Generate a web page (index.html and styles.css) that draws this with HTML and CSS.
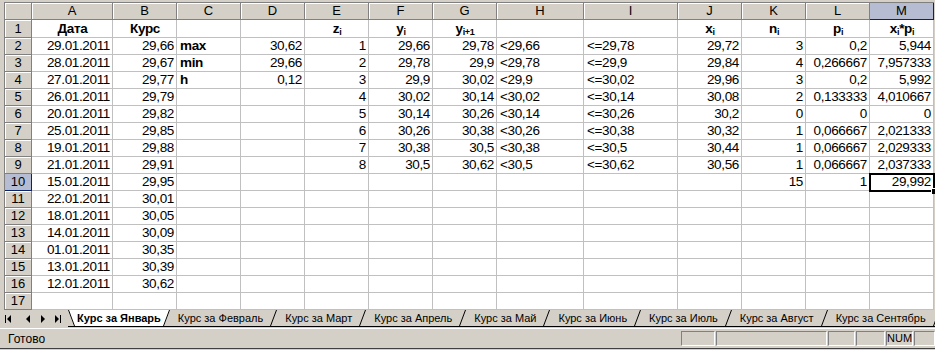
FILE: index.html
```html
<!DOCTYPE html>
<html>
	<head>
		<meta charset="utf-8">
		<title>Курс за Январь</title>
		<link rel="stylesheet" href="styles.css">
	</head>
	<body>
		<div class="sheet">
			<div class="hd"></div><div class="hd">A</div><div class="hd">B</div><div class="hd">C</div><div class="hd">D</div><div class="hd">E</div><div class="hd">F</div><div class="hd">G</div><div class="hd">H</div><div class="hd">I</div><div class="hd">J</div><div class="hd">K</div><div class="hd">L</div><div class="hd on">M</div>

			<div class="hd">1</div><div class="t">Дата</div><div class="t">Курс</div><div></div><div></div><div class="t">z<sub>i</sub></div><div class="t">y<sub>i</sub></div><div class="t">y<sub>i+1</sub></div><div></div><div></div><div class="t">x<sub>i</sub></div><div class="t">n<sub>i</sub></div><div class="t">p<sub>i</sub></div><div class="t">x<sub>i</sub>*p<sub>i</sub></div>

			<div class="hd">2</div><div class="n">29.01.2011</div><div class="n">29,66</div><div class="b">max</div><div class="n">30,62</div><div class="n">1</div><div class="n">29,66</div><div class="n">29,78</div><div>&lt;29,66</div><div>&lt;=29,78</div><div class="n">29,72</div><div class="n">3</div><div class="n">0,2</div><div class="n">5,944</div>
			<div class="hd">3</div><div class="n">28.01.2011</div><div class="n">29,67</div><div class="b">min</div><div class="n">29,66</div><div class="n">2</div><div class="n">29,78</div><div class="n">29,9</div><div>&lt;29,78</div><div>&lt;=29,9</div><div class="n">29,84</div><div class="n">4</div><div class="n">0,266667</div><div class="n">7,957333</div>
			<div class="hd">4</div><div class="n">27.01.2011</div><div class="n">29,77</div><div class="b">h</div><div class="n">0,12</div><div class="n">3</div><div class="n">29,9</div><div class="n">30,02</div><div>&lt;29,9</div><div>&lt;=30,02</div><div class="n">29,96</div><div class="n">3</div><div class="n">0,2</div><div class="n">5,992</div>
			<div class="hd">5</div><div class="n">26.01.2011</div><div class="n">29,79</div><div></div><div></div><div class="n">4</div><div class="n">30,02</div><div class="n">30,14</div><div>&lt;30,02</div><div>&lt;=30,14</div><div class="n">30,08</div><div class="n">2</div><div class="n">0,133333</div><div class="n">4,010667</div>
			<div class="hd">6</div><div class="n">20.01.2011</div><div class="n">29,82</div><div></div><div></div><div class="n">5</div><div class="n">30,14</div><div class="n">30,26</div><div>&lt;30,14</div><div>&lt;=30,26</div><div class="n">30,2</div><div class="n">0</div><div class="n">0</div><div class="n">0</div>
			<div class="hd">7</div><div class="n">25.01.2011</div><div class="n">29,85</div><div></div><div></div><div class="n">6</div><div class="n">30,26</div><div class="n">30,38</div><div>&lt;30,26</div><div>&lt;=30,38</div><div class="n">30,32</div><div class="n">1</div><div class="n">0,066667</div><div class="n">2,021333</div>
			<div class="hd">8</div><div class="n">19.01.2011</div><div class="n">29,88</div><div></div><div></div><div class="n">7</div><div class="n">30,38</div><div class="n">30,5</div><div>&lt;30,38</div><div>&lt;=30,5</div><div class="n">30,44</div><div class="n">1</div><div class="n">0,066667</div><div class="n">2,029333</div>
			<div class="hd">9</div><div class="n">21.01.2011</div><div class="n">29,91</div><div></div><div></div><div class="n">8</div><div class="n">30,5</div><div class="n">30,62</div><div>&lt;30,5</div><div>&lt;=30,62</div><div class="n">30,56</div><div class="n">1</div><div class="n">0,066667</div><div class="n">2,037333</div>
			<div class="hd on">10</div><div class="n">15.01.2011</div><div class="n">29,95</div><div></div><div></div><div></div><div></div><div></div><div></div><div></div><div></div><div class="n">15</div><div class="n">1</div><div class="n active">29,992</div>
			<div class="hd">11</div><div class="n">22.01.2011</div><div class="n">30,01</div><div></div><div></div><div></div><div></div><div></div><div></div><div></div><div></div><div></div><div></div><div></div>
			<div class="hd">12</div><div class="n">18.01.2011</div><div class="n">30,05</div><div></div><div></div><div></div><div></div><div></div><div></div><div></div><div></div><div></div><div></div><div></div>
			<div class="hd">13</div><div class="n">14.01.2011</div><div class="n">30,09</div><div></div><div></div><div></div><div></div><div></div><div></div><div></div><div></div><div></div><div></div><div></div>
			<div class="hd">14</div><div class="n">01.01.2011</div><div class="n">30,35</div><div></div><div></div><div></div><div></div><div></div><div></div><div></div><div></div><div></div><div></div><div></div>
			<div class="hd">15</div><div class="n">13.01.2011</div><div class="n">30,39</div><div></div><div></div><div></div><div></div><div></div><div></div><div></div><div></div><div></div><div></div><div></div>
			<div class="hd">16</div><div class="n">12.01.2011</div><div class="n">30,62</div><div></div><div></div><div></div><div></div><div></div><div></div><div></div><div></div><div></div><div></div><div></div>
			<div class="hd">17</div><div></div><div></div><div></div><div></div><div></div><div></div><div></div><div></div><div></div><div></div><div></div><div></div><div></div>
		</div>

		<div class="tabs">
			<!-- кнопки прокрутки листов -->
			<svg class="nav" width="63" height="16" viewBox="0 0 63 16">
				<rect x="0" y="4" width="1" height="8" fill="#000"/>
				<polygon points="2,8 6,4 6,12" fill="#000"/>
				<polygon points="21,8 25,4 25,12" fill="#000"/>
				<polygon points="36,4 40,8 36,12" fill="#000"/>
				<polygon points="50,4 54,8 50,12" fill="#000"/>
				<rect x="55" y="4" width="1" height="8" fill="#000"/>
			</svg>
			<div class="tab cur">
				<svg width="7" height="16" viewBox="0 0 7 16"><polygon points="0,0 7,0 7,16 6,16" fill="#fff"/><line x1="0.5" y1="0" x2="6.5" y2="16" stroke="#000"/></svg>
				<span>Курс за Январь</span>
				<svg width="7" height="16" viewBox="0 0 7 16"><polygon points="0,0 7,0 1,16 0,16" fill="#fff"/><line x1="6.5" y1="0" x2="0.5" y2="16" stroke="#000"/></svg>
			</div>
			<div class="tab"><span>Курс за Февраль</span><svg width="7" height="16" viewBox="0 0 7 16"><line x1="6.5" y1="0" x2="0.5" y2="16" stroke="#000"/></svg></div>
			<div class="tab"><span>Курс за Март</span><svg width="7" height="16" viewBox="0 0 7 16"><line x1="6.5" y1="0" x2="0.5" y2="16" stroke="#000"/></svg></div>
			<div class="tab"><span>Курс за Апрель</span><svg width="7" height="16" viewBox="0 0 7 16"><line x1="6.5" y1="0" x2="0.5" y2="16" stroke="#000"/></svg></div>
			<div class="tab"><span>Курс за Май</span><svg width="7" height="16" viewBox="0 0 7 16"><line x1="6.5" y1="0" x2="0.5" y2="16" stroke="#000"/></svg></div>
			<div class="tab"><span>Курс за Июнь</span><svg width="7" height="16" viewBox="0 0 7 16"><line x1="6.5" y1="0" x2="0.5" y2="16" stroke="#000"/></svg></div>
			<div class="tab"><span>Курс за Июль</span><svg width="7" height="16" viewBox="0 0 7 16"><line x1="6.5" y1="0" x2="0.5" y2="16" stroke="#000"/></svg></div>
			<div class="tab"><span>Курс за Август</span><svg width="7" height="16" viewBox="0 0 7 16"><line x1="6.5" y1="0" x2="0.5" y2="16" stroke="#000"/></svg></div>
			<div class="tab"><span>Курс за Сентябрь</span><svg width="7" height="16" viewBox="0 0 7 16"><line x1="6.5" y1="0" x2="0.5" y2="16" stroke="#000"/></svg></div>
		</div>

		<div class="status">
			<span class="ready">Готово</span>
			<div class="panels">
				<div class="p p1"></div>
				<div class="p p2"></div>
				<div class="p p3"></div>
				<div class="p p4"></div>
				<div class="p p5">NUM</div>
				<div class="p p6"></div>
			</div>
		</div>
	</body>
</html>
```

FILE: styles.css
```css
body {
	margin: 0;
	width: 935px;
	height: 350px;
	overflow: hidden;
	background: #d4d0c8;
	font-family: "Liberation Sans", Arial, sans-serif;
}

/* лист */
.sheet {
	display: grid;
	grid-template-columns: 27px 81px repeat(6, 64px) 87px 94px repeat(4, 64px);
	grid-template-rows: 17px 18px repeat(16, 17px);
	margin: 2px 0 0 4px;
	width: 929px;
	border-left: 1px solid #808080;
	border-top: 1px solid #808080;
	background: #fff;
	font-size: 13.5px;
	letter-spacing: -0.35px;
	color: #000;
}
.sheet > div {
	box-sizing: border-box;
	border-right: 1px solid #c0c0c0;
	border-bottom: 1px solid #c0c0c0;
	padding: 0 2px 0 3px;
	line-height: 16px;
	white-space: nowrap;
	overflow: hidden;
}
.sheet > .hd {
	display: flex;
	align-items: center;
	justify-content: center;
	background: #d4d0c8;
	border-right-color: #808080;
	border-bottom-color: #808080;
	box-shadow: inset 1px 1px 0 #fff;
	padding: 0;
	letter-spacing: 0;
	font-size: 13px;
}
.sheet > .hd.on {
	background: #b6bdd2;
	border-right-color: #0a246a;
	border-bottom-color: #0a246a;
	box-shadow: none;
}
.sheet > .n {
	text-align: right;
}
.sheet > .b {
	font-weight: bold;
}
.sheet > .t {
	font-weight: bold;
	text-align: center;
	line-height: 18px;
}
.sheet sub {
	font-size: 9px;
	line-height: 0;
	vertical-align: -2px;
}
.sheet > .active {
	position: relative;
	overflow: visible;
	outline: 2px solid #000;
	outline-offset: -1px;
	z-index: 2;
}
.sheet > .active::after {
	content: "";
	position: absolute;
	right: -4px;
	bottom: -4px;
	width: 5px;
	height: 5px;
	background: #000;
	border: 1px solid #fff;
	border-width: 1px 0 0 1px;
}

/* ярлыки листов */
.tabs {
	display: flex;
	align-items: flex-start;
	height: 18px;
	padding-left: 5px;
	font-size: 11px;
	white-space: nowrap;
	overflow: hidden;
}
.tabs .nav {
	flex: none;
	margin-top: 1px;
}
.tab {
	display: flex;
	flex: none;
	height: 16px;
	border-bottom: 1px solid #000;
	line-height: 16px;
}
.tab span {
	padding: 0 7px 0 8px;
}
.tab svg {
	display: block;
	flex: none;
}
.tab.cur {
	font-weight: bold;
}
.tab.cur span {
	background: #fff;
	padding: 0 2px;
}

/* строка состояния */
.status {
	display: flex;
	align-items: center;
	height: 19px;
	border-top: 1px solid #fff;
	border-bottom: 1px solid #404040;
	font-size: 12px;
}
.status .ready {
	padding-left: 8px;
}
.panels {
	display: flex;
	gap: 1px;
	margin-left: auto;
}
.p {
	box-sizing: border-box;
	height: 15px;
	border: 1px solid;
	border-color: #808080 #fff #fff #808080;
	font-size: 11px;
	line-height: 13px;
	text-align: center;
}
.p1 { width: 34px; }
.p2 { width: 111px; }
.p3 { width: 27px; }
.p4 { width: 29px; }
.p5 { width: 27px; }
.p6 { width: 21px; }
```
